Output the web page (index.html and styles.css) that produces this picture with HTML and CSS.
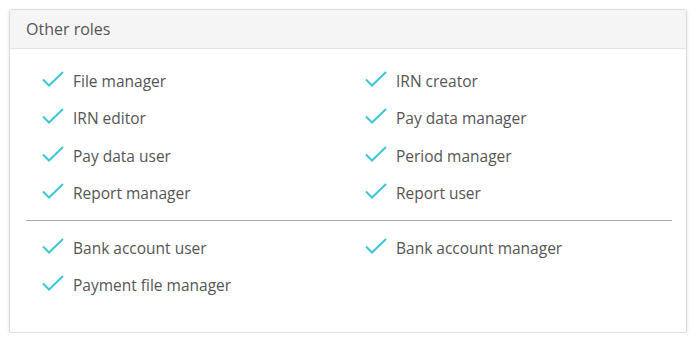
FILE: index.html
```html
<!DOCTYPE html>
<html lang="en">
<head>
    <meta charset="UTF-8">
    <title>Other roles</title>
    <link rel="stylesheet" href="styles.css">
</head>
<body>

<div class="panel">
    <div class="panel-heading">Other roles</div>
    <div class="panel-body">
        <ul class="role-list">
            <li><svg class="check" viewBox="0 0 22 16"><path d="M1 8.5 L7 14.5 L21 1"/></svg>File manager</li>
            <li><svg class="check" viewBox="0 0 22 16"><path d="M1 8.5 L7 14.5 L21 1"/></svg>IRN creator</li>
            <li><svg class="check" viewBox="0 0 22 16"><path d="M1 8.5 L7 14.5 L21 1"/></svg>IRN editor</li>
            <li><svg class="check" viewBox="0 0 22 16"><path d="M1 8.5 L7 14.5 L21 1"/></svg>Pay data manager</li>
            <li><svg class="check" viewBox="0 0 22 16"><path d="M1 8.5 L7 14.5 L21 1"/></svg>Pay data user</li>
            <li><svg class="check" viewBox="0 0 22 16"><path d="M1 8.5 L7 14.5 L21 1"/></svg>Period manager</li>
            <li><svg class="check" viewBox="0 0 22 16"><path d="M1 8.5 L7 14.5 L21 1"/></svg>Report manager</li>
            <li><svg class="check" viewBox="0 0 22 16"><path d="M1 8.5 L7 14.5 L21 1"/></svg>Report user</li>
        </ul>
        <hr class="divider">
        <ul class="role-list">
            <li><svg class="check" viewBox="0 0 22 16"><path d="M1 8.5 L7 14.5 L21 1"/></svg>Bank account user</li>
            <li><svg class="check" viewBox="0 0 22 16"><path d="M1 8.5 L7 14.5 L21 1"/></svg>Bank account manager</li>
            <li><svg class="check" viewBox="0 0 22 16"><path d="M1 8.5 L7 14.5 L21 1"/></svg>Payment file manager</li>
        </ul>
    </div>
</div>

</body>
</html>
```

FILE: styles.css
```css
/* Global */
body {
    font-family: 'Open Sans', sans-serif;
    margin: 0;
    padding: 0;
    background-color: #fff;
    color: #555;
}

/* Panel */
.panel {
    margin: 9px 9px 0 9px;
    width: 676px;
    border: 1px solid #ddd;
    border-radius: 3px;
    background: #fff;
    box-shadow: 0 1px 3px rgba(0, 0, 0, 0.15);
}

.panel-heading {
    height: 38px;
    line-height: 38px;
    padding: 0 16px;
    font-size: 16px;
    color: #555;
    background-color: #f5f5f5;
    border-bottom: 1px solid #e3e3e3;
    border-radius: 3px 3px 0 0;
}

.panel-body {
    padding: 13px 14px 28px 16px;
}

/* Role list */
.role-list {
    list-style: none;
    margin: 0;
    padding: 0;
    display: grid;
    grid-template-columns: 1fr 1fr;
}

.role-list li {
    display: flex;
    align-items: center;
    height: 37.5px;
    padding-left: 16px;
    font-size: 15.5px;
    color: #555;
}

.check {
    width: 22px;
    height: 16px;
    margin-right: 9px;
    margin-top: -4px;
    fill: none;
    stroke: #3ec6d8;
    stroke-width: 2;
}

.divider {
    margin: 8px 0;
    border: 0;
    border-top: 1px solid #aaa;
}
```
